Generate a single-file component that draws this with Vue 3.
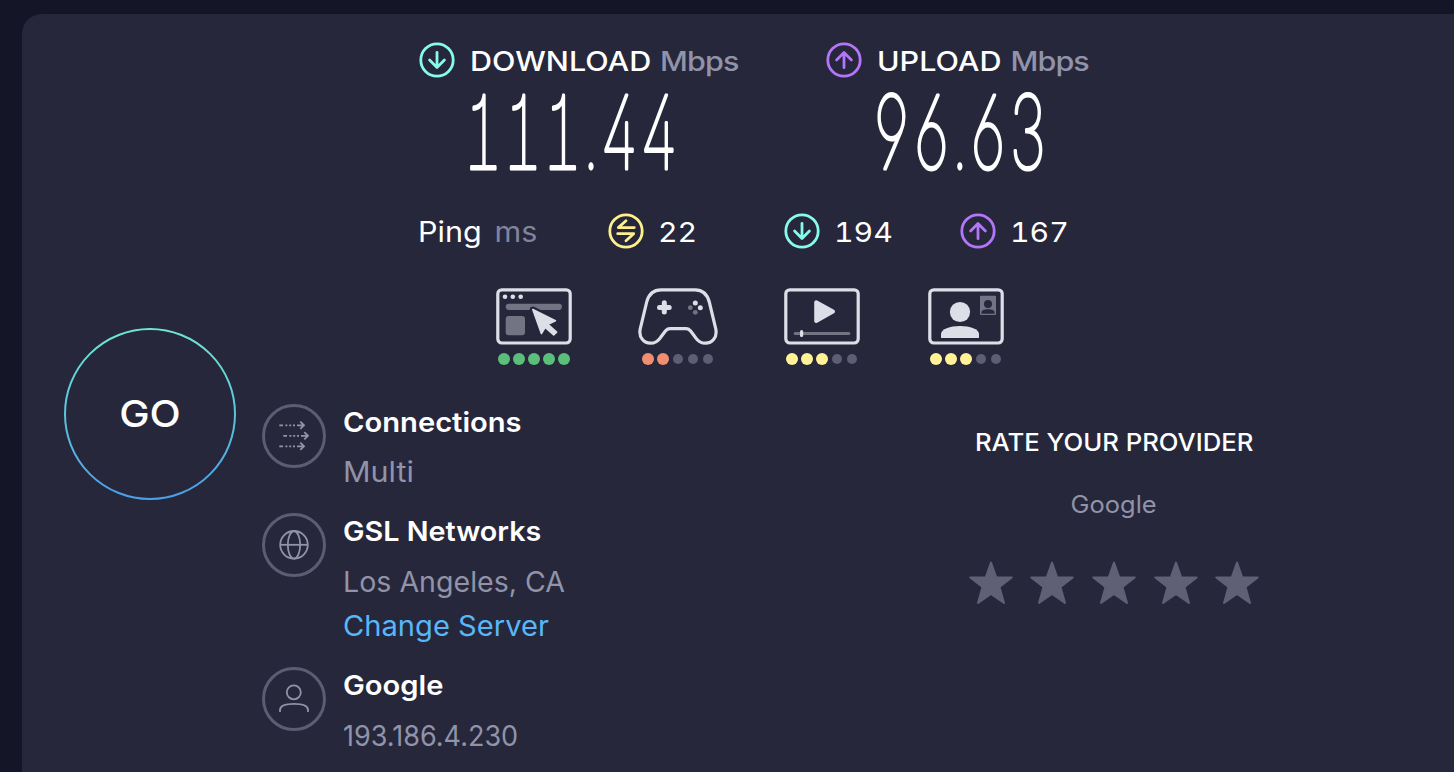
<script setup>
import { ref } from 'vue';

const speeds = [
  { id: 'download', label: 'DOWNLOAD', value: '111.44', left: 0.6, width: 215 },
  { id: 'upload', label: 'UPLOAD', value: '96.63', left: 1.5, width: 176.5 },
];

const pings = [
  { id: 'idle', value: 22 },
  { id: 'download', value: 194 },
  { id: 'upload', value: 167 },
];

const activities = [
  { id: 'browsing', score: 5, color: 'green' },
  { id: 'gaming', score: 2, color: 'orange' },
  { id: 'streaming', score: 3, color: 'yellow' },
  { id: 'calls', score: 3, color: 'yellow' },
];

const rating = ref(0);
</script>

<template>
  <div class="page">
    <main class="panel">
      <div class="go-column">
        <button class="go-button">
          <svg class="go-ring" viewBox="0 0 172 172">
            <defs>
              <linearGradient id="ring" x1="0" y1="0" x2="0" y2="1">
                <stop offset="0" stop-color="#6ee7cf" />
                <stop offset="1" stop-color="#4a9fe8" />
              </linearGradient>
            </defs>
            <circle cx="86" cy="86" r="85" fill="none" stroke="url(#ring)" stroke-width="2" />
          </svg>
          <span class="go-text">GO</span>
        </button>
      </div>

      <div class="content">
        <section class="speeds">
          <div v-for="speed in speeds" :key="speed.id" class="speed">
            <div class="speed-head">
              <svg class="arrow-icon" :class="speed.id" viewBox="0 0 36 36">
                <circle cx="18" cy="18" r="16.2" />
                <path d="M18 10.3V25.3M10.6 18L18 25.4L25.4 18" />
              </svg>
              <div class="speed-label">{{ speed.label }}<span class="unit">Mbps</span></div>
            </div>
            <svg class="speed-value" viewBox="0 0 240 92">
              <text :x="speed.left" y="80.5" :textLength="speed.width" lengthAdjust="spacingAndGlyphs">{{ speed.value }}</text>
            </svg>
          </div>
        </section>

        <section class="pings">
          <div class="ping-title"><span class="ping-name">Ping <span class="ping-unit">ms</span></span></div>
          <div v-for="ping in pings" :key="ping.id" class="ping">
            <svg class="arrow-icon" :class="ping.id" viewBox="0 0 36 36">
              <circle cx="18" cy="18" r="16.2" />
              <path v-if="ping.id === 'idle'" d="M18 7.8L10.3 14.6H26.3M9.7 20.7H25.7L18 27.8" />
              <path v-else d="M18 10.3V25.3M10.6 18L18 25.4L25.4 18" />
            </svg>
            <span class="ping-value">{{ ping.value }}</span>
          </div>
        </section>

        <section class="activities">
          <div v-for="item in activities" :key="item.id" class="activity">
            <svg v-if="item.id === 'browsing'" class="activity-icon" viewBox="0 0 76 57">
              <rect class="line" x="1.8" y="1.8" width="72.4" height="53.2" rx="4" />
              <circle class="light" cx="9" cy="8.7" r="2.3" />
              <circle class="light" cx="16.8" cy="8.7" r="2.3" />
              <circle class="light" cx="24.7" cy="8.7" r="2.3" />
              <rect class="dim" x="9.7" y="15.7" width="56.3" height="6.2" rx="3.1" />
              <rect class="dim" x="9.7" y="28" width="19.3" height="19.3" rx="3" />
              <path class="cursor-gap" d="M36.8 21.5L59.4 32.8L50 34L45.4 45.6Z" />
              <path class="cursor" d="M36.8 21.5L59.4 32.8L52 36.4L60.6 44.2L57.7 47L49.2 39.3L45.4 45.6Z" />
            </svg>
            <svg v-else-if="item.id === 'gaming'" class="activity-icon gamepad" viewBox="0 0 80 57">
              <path class="line" d="M23 1.8H57C65 1.8 69.5 7 71.3 14L77.8 41C79.5 49.5 74 55.2 67.5 55.2C62.5 55.2 59.5 52.5 57.3 49.3L52.8 43.3Q50.8 40.6 48 40.6H32Q29.2 40.6 27.2 43.3L22.7 49.3C20.5 52.5 17.5 55.2 12.5 55.2C6 55.2 .5 49.5 2.2 41L8.7 14C10.5 7 15 1.8 23 1.8Z" />
              <path class="dpad" d="M26.3 14.8V24M21.5 19.5H31.2" />
              <circle class="light" cx="57.3" cy="15" r="2.5" />
              <circle class="light" cx="62.3" cy="19.7" r="2.5" />
              <circle class="dim" cx="52.3" cy="19.7" r="2.4" />
              <circle class="dim" cx="57.3" cy="24.3" r="2.4" />
            </svg>
            <svg v-else-if="item.id === 'streaming'" class="activity-icon" viewBox="0 0 76 57">
              <rect class="line" x="1.8" y="1.8" width="72.4" height="53.2" rx="4" />
              <path class="play" d="M32.2 14.2L49 23.6L32.2 33Z" />
              <rect class="dim" x="9.7" y="44" width="56.6" height="3" rx="1.5" />
              <rect class="light" x="16" y="42" width="3.2" height="7" rx="1.5" />
            </svg>
            <svg v-else class="activity-icon" viewBox="0 0 76 57">
              <rect class="line" x="1.8" y="1.8" width="72.4" height="53.2" rx="4" />
              <circle class="light" cx="32" cy="24" r="10.1" />
              <path class="light" d="M13 50V46C13 41 22 38 32 38S51 41 51 46V50Z" />
              <rect class="dim" x="52" y="7.7" width="16" height="19.3" rx="1" />
              <circle class="hole" cx="60" cy="16" r="4" />
              <path class="hole" d="M53.5 25.7V24.4C53.5 22.4 56 21.3 60 21.3S66.5 22.4 66.5 24.4V25.7Z" />
            </svg>
            <div class="score">
              <span v-for="n in 5" :key="n" class="dot" :class="n <= item.score ? item.color : 'off'"></span>
            </div>
          </div>
        </section>

        <div class="bottom">
          <section class="details">
            <div class="detail connections">
              <svg class="detail-icon" viewBox="0 0 64 64">
                <circle class="ring" cx="32" cy="32" r="30.5" />
                <g v-for="row in [[0, 21.3], [4, 31.8], [0, 42.3]]" :key="row[1]" :transform="`translate(${row[0]} ${row[1]})`">
                  <path class="flow" d="M17.3 0H21M23.4 0H25.4M27.2 0H29.2M31 0H33M35 0H41.5M38.3 -3.6L42 0L38.3 3.6" />
                </g>
              </svg>
              <div class="detail-body">
                <div class="detail-title">Connections</div>
                <div class="detail-text multi">Multi</div>
              </div>
            </div>
            <div class="detail server">
              <svg class="detail-icon" viewBox="0 0 64 64">
                <circle class="ring" cx="32" cy="32" r="30.5" />
                <circle class="glyph" cx="32" cy="31.8" r="13.8" />
                <ellipse class="glyph" cx="32" cy="31.8" rx="6.2" ry="13.8" />
                <path class="glyph" d="M18 31.8H46" />
              </svg>
              <div class="detail-body">
                <div class="detail-title network">GSL Networks</div>
                <div class="detail-text city">Los Angeles, CA</div>
                <a class="change">Change Server</a>
              </div>
            </div>
            <div class="detail provider">
              <svg class="detail-icon" viewBox="0 0 64 64">
                <circle class="ring" cx="32" cy="32" r="30.5" />
                <circle class="glyph" cx="31.8" cy="25.3" r="7" />
                <path class="glyph" d="M18 45V43C18 38.6 24 36.9 32 36.9S46 38.6 46 43V45" />
              </svg>
              <div class="detail-body">
                <div class="detail-title">Google</div>
                <div class="detail-text ip">193.186.4.230</div>
              </div>
            </div>
          </section>

          <section class="rate">
            <div class="rate-title">RATE YOUR PROVIDER</div>
            <div class="rate-provider">Google</div>
            <div class="stars">
              <svg v-for="n in 5" :key="n" class="star" :class="{ active: n <= rating }" viewBox="0 0 44 44" @click="rating = n">
                <path d="M22 1.6L27.1 16.2L42.7 16.4L30.5 26L35 42L22 33L9 42L13.5 26L1.3 16.4L16.9 16.2Z" />
              </svg>
            </div>
          </section>
        </div>
      </div>
    </main>
  </div>
</template>

<style>
body {
  background: #141526;
}
</style>

<style scoped>
.page {
  box-sizing: border-box;
  height: 772px;
  padding: 14px 0 0 22px;
  overflow: hidden;
  background: #141526;
  font-family: Inter, "Open Sans", sans-serif;
  color: #fff;
}

.panel {
  display: flex;
  height: 758px;
  background: #26273b;
  border-top-left-radius: 20px;
}

.go-column {
  width: 240px;
  flex: none;
  padding: 314px 0 0 42px;
  box-sizing: border-box;
}

.go-button {
  display: grid;
  place-items: center;
  width: 172px;
  height: 172px;
  padding: 0;
  border: 0;
  background: none;
  color: #fff;
  font: 500 37px/44px Inter, sans-serif;
}

.go-ring,
.go-text {
  grid-area: 1 / 1;
}

.go-text {
  transform: scaleX(1.1);
}

.go-ring {
  width: 172px;
  height: 172px;
}

.content {
  flex: 1;
  padding-top: 28px;
}

.speeds {
  display: flex;
  height: 171px;
  padding-left: 157px;
}

.speed {
  width: 407px;
}

.speed-head {
  display: flex;
  align-items: center;
  height: 36px;
  font-size: 27.5px;
  line-height: 30px;
}

.arrow-icon {
  flex: none;
  width: 36px;
  height: 36px;
  fill: none;
  stroke: #86fbea;
  stroke-width: 2.8;
  stroke-linecap: round;
  stroke-linejoin: round;
}

.arrow-icon.upload {
  stroke: #b476f9;
  transform: rotate(180deg);
}

.arrow-icon.idle {
  stroke: #fff08c;
}

/* the wide headings are stretched a little to the right */
.speed-label {
  margin: 2px 0 0 15px;
  font-weight: 500;
  transform: scaleX(1.11);
  transform-origin: left;
}

.unit {
  margin-left: 8px;
  color: #9193a8;
  letter-spacing: -0.8px;
}

.speed-value {
  display: block;
  width: 240px;
  height: 92px;
  margin: 10px 0 0 44px;
  overflow: visible;
}

.speed-value text {
  fill: #fff;
  stroke: #fff;
  stroke-width: 3.2;
  stroke-linejoin: round;
  font-size: 102px;
  font-weight: 100;
  font-feature-settings: "tnum", "cv01", "cv02", "cv03", "cv04";
}

.pings {
  display: flex;
  align-items: center;
  height: 36px;
  padding-left: 156px;
  font-size: 28px;
  line-height: 34px;
}

.ping-title {
  width: 190px;
  padding-top: 2px;
}

.ping-name {
  display: inline-block;
  transform: scaleX(1.09);
  transform-origin: left;
}

.ping-unit {
  margin-left: 4px;
  color: #83849a;
}

.ping {
  display: flex;
  align-items: center;
  width: 176px;
}

.ping-value {
  margin: 2px 0 0 14px;
  font-size: 27.5px;
  font-feature-settings: "tnum";
  transform: scaleX(1.1);
  transform-origin: left;
}

.activities {
  display: flex;
  gap: 68px;
  height: 77px;
  margin-bottom: 39px;
  padding: 39px 0 0 234px;
}

.activity {
  display: flex;
  flex-direction: column;
  align-items: center;
  width: 76px;
}

.activity-icon {
  flex: none;
  width: 76px;
  height: 57px;
}

.activity-icon.gamepad {
  width: 80px;
}

.line {
  fill: none;
  stroke: #dcdfe7;
  stroke-width: 3.2;
}

.light {
  fill: #dcdfe7;
}

.dim {
  fill: #727484;
}

.hole {
  fill: #26273b;
}

.cursor,
.play {
  fill: #dcdfe7;
  stroke: #dcdfe7;
  stroke-linejoin: round;
  stroke-width: 1.6;
}

.play {
  stroke-width: 4;
}

.cursor-gap {
  fill: #26273b;
  stroke: #26273b;
  stroke-width: 6;
  stroke-linejoin: round;
}

.dpad {
  fill: none;
  stroke: #dcdfe7;
  stroke-width: 5;
  stroke-linecap: round;
}

.score {
  display: flex;
  align-items: center;
  justify-content: space-between;
  width: 72px;
  height: 12px;
  margin-top: 8px;
}

.dot {
  width: 12px;
  height: 12px;
  border-radius: 50%;
}

.dot.green {
  background: #5abf7b;
}

.dot.orange {
  background: #f28e70;
}

.dot.yellow {
  background: #fff297;
}

.dot.off {
  width: 10px;
  height: 10px;
  margin: 0 1px;
  background: #5d5e73;
}

.bottom {
  display: flex;
}

.details {
  width: 652px;
}

.detail {
  display: flex;
  font-size: 28px;
  line-height: 36px;
}

.connections {
  height: 109px;
}

.server {
  height: 154px;
}

.detail-icon {
  flex: none;
  width: 64px;
  height: 64px;
  margin-right: 17px;
  fill: none;
}

.ring {
  stroke: #5c5d73;
  stroke-width: 3;
}

.glyph,
.flow {
  stroke: #9193a8;
  stroke-width: 1.8;
}

.detail-title,
.detail-text,
.change {
  transform-origin: left;
}

.detail-title {
  font-size: 27.5px;
  font-weight: 600;
  transform: scaleX(1.06);
}

.detail-title.network {
  transform: scaleX(1.045);
}

.detail-text {
  margin-top: 14px;
  color: #9193a8;
}

.multi {
  transform: scaleX(1.09);
}

.city {
  margin-top: 15px;
  transform: scaleX(1.02);
}

.ip {
  margin-top: 15px;
  transform: scaleX(0.965);
}

.change {
  display: block;
  margin-top: 8px;
  color: #58b7fa;
  transform: scaleX(1.04);
}

.rate {
  display: flex;
  flex-direction: column;
  align-items: center;
  width: 400px;
  padding-top: 23px;
}

.rate-title {
  font-size: 24px;
  font-weight: 500;
  line-height: 32px;
  transform: scaleX(1.07);
}

.rate-provider {
  margin-top: 30px;
  color: #9193a8;
  font-size: 24px;
  line-height: 32px;
  transform: scaleX(1.06);
}

.stars {
  display: flex;
  gap: 17.6px;
  margin-top: 40px;
}

.star {
  width: 44px;
  height: 44px;
  fill: #5f6075;
  stroke: #5f6075;
  stroke-width: 2;
  stroke-linejoin: round;
}

.star.active {
  fill: #fff297;
  stroke: #fff297;
}
</style>
